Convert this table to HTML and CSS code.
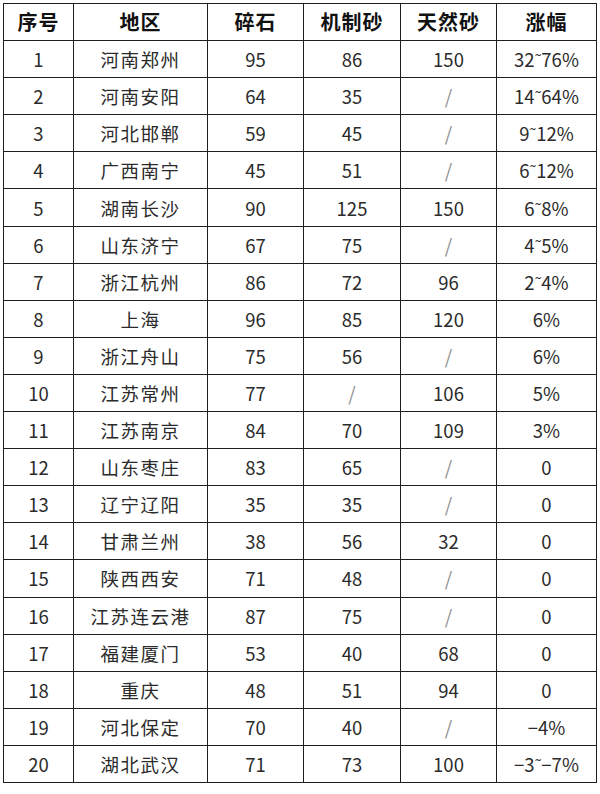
FILE: index.html
```html
<!DOCTYPE html>
<html lang="zh-CN">
<head>
<meta charset="utf-8">
<title>价格表</title>
<link rel="stylesheet" href="styles.css">
</head>
<body>
<div class="wrap">
<table class="price">
<colgroup>
<col class="c1"><col class="c2"><col class="c3"><col class="c4"><col class="c5"><col class="c6">
</colgroup>
<thead>
<tr><th>序号</th><th>地区</th><th>碎石</th><th>机制砂</th><th>天然砂</th><th>涨幅</th></tr>
</thead>
<tbody>
<tr><td>1</td><td class="cn">河南郑州</td><td>95</td><td>86</td><td>150</td><td>32<span class="t">˜</span>76%</td></tr>
<tr><td>2</td><td class="cn">河南安阳</td><td>64</td><td>35</td><td class="na">/</td><td>14<span class="t">˜</span>64%</td></tr>
<tr><td>3</td><td class="cn">河北邯郸</td><td>59</td><td>45</td><td class="na">/</td><td>9<span class="t">˜</span>12%</td></tr>
<tr><td>4</td><td class="cn">广西南宁</td><td>45</td><td>51</td><td class="na">/</td><td>6<span class="t">˜</span>12%</td></tr>
<tr><td>5</td><td class="cn">湖南长沙</td><td>90</td><td>125</td><td>150</td><td>6<span class="t">˜</span>8%</td></tr>
<tr><td>6</td><td class="cn">山东济宁</td><td>67</td><td>75</td><td class="na">/</td><td>4<span class="t">˜</span>5%</td></tr>
<tr><td>7</td><td class="cn">浙江杭州</td><td>86</td><td>72</td><td>96</td><td>2<span class="t">˜</span>4%</td></tr>
<tr><td>8</td><td class="cn">上海</td><td>96</td><td>85</td><td>120</td><td>6%</td></tr>
<tr><td>9</td><td class="cn">浙江舟山</td><td>75</td><td>56</td><td class="na">/</td><td>6%</td></tr>
<tr><td>10</td><td class="cn">江苏常州</td><td>77</td><td class="na">/</td><td>106</td><td>5%</td></tr>
<tr><td>11</td><td class="cn">江苏南京</td><td>84</td><td>70</td><td>109</td><td>3%</td></tr>
<tr><td>12</td><td class="cn">山东枣庄</td><td>83</td><td>65</td><td class="na">/</td><td>0</td></tr>
<tr><td>13</td><td class="cn">辽宁辽阳</td><td>35</td><td>35</td><td class="na">/</td><td>0</td></tr>
<tr><td>14</td><td class="cn">甘肃兰州</td><td>38</td><td>56</td><td>32</td><td>0</td></tr>
<tr><td>15</td><td class="cn">陕西西安</td><td>71</td><td>48</td><td class="na">/</td><td>0</td></tr>
<tr><td>16</td><td class="cn">江苏连云港</td><td>87</td><td>75</td><td class="na">/</td><td>0</td></tr>
<tr><td>17</td><td class="cn">福建厦门</td><td>53</td><td>40</td><td>68</td><td>0</td></tr>
<tr><td>18</td><td class="cn">重庆</td><td>48</td><td>51</td><td>94</td><td>0</td></tr>
<tr><td>19</td><td class="cn">河北保定</td><td>70</td><td>40</td><td class="na">/</td><td>−4%</td></tr>
<tr><td>20</td><td class="cn">湖北武汉</td><td>71</td><td>73</td><td>100</td><td>−3<span class="t">˜</span>−7%</td></tr>
</tbody>
</table>
</div>
</body>
</html>
```
FILE: styles.css
```css
html, body {
  margin: 0;
  padding: 0;
  background: #ffffff;
}
.wrap {
  padding: 3px 0 0 3px;
}
.price {
  border-collapse: collapse;
  table-layout: fixed;
  width: 593px;
  font-family: "Noto Sans CJK SC", "Noto Sans", sans-serif;
  color: #2b2b2b;
}
.c1 { width: 70px; }
.c2 { width: 134px; }
.c3 { width: 96px; }
.c4 { width: 97px; }
.c5 { width: 96px; }
.c6 { width: 100px; }
.price th, .price td {
  border: 1.5px solid #1e1e1e;
  text-align: center;
  vertical-align: middle;
  padding: 0;
  height: 36.1px;
  line-height: 20px;
}
.price th {
  font-size: 20px;
  font-weight: 700;
  color: #111;
  letter-spacing: 1px;
}
.price td {
  font-size: 18.5px;
  font-weight: 400;
}
.price td.cn {
  letter-spacing: 1.5px;
}
.price td.na {
  color: #8f8f8f;
  font-size: 19px;
}
.t {
  display: inline-block;
  font-size: 15px;
  vertical-align: 2px;
}
```
